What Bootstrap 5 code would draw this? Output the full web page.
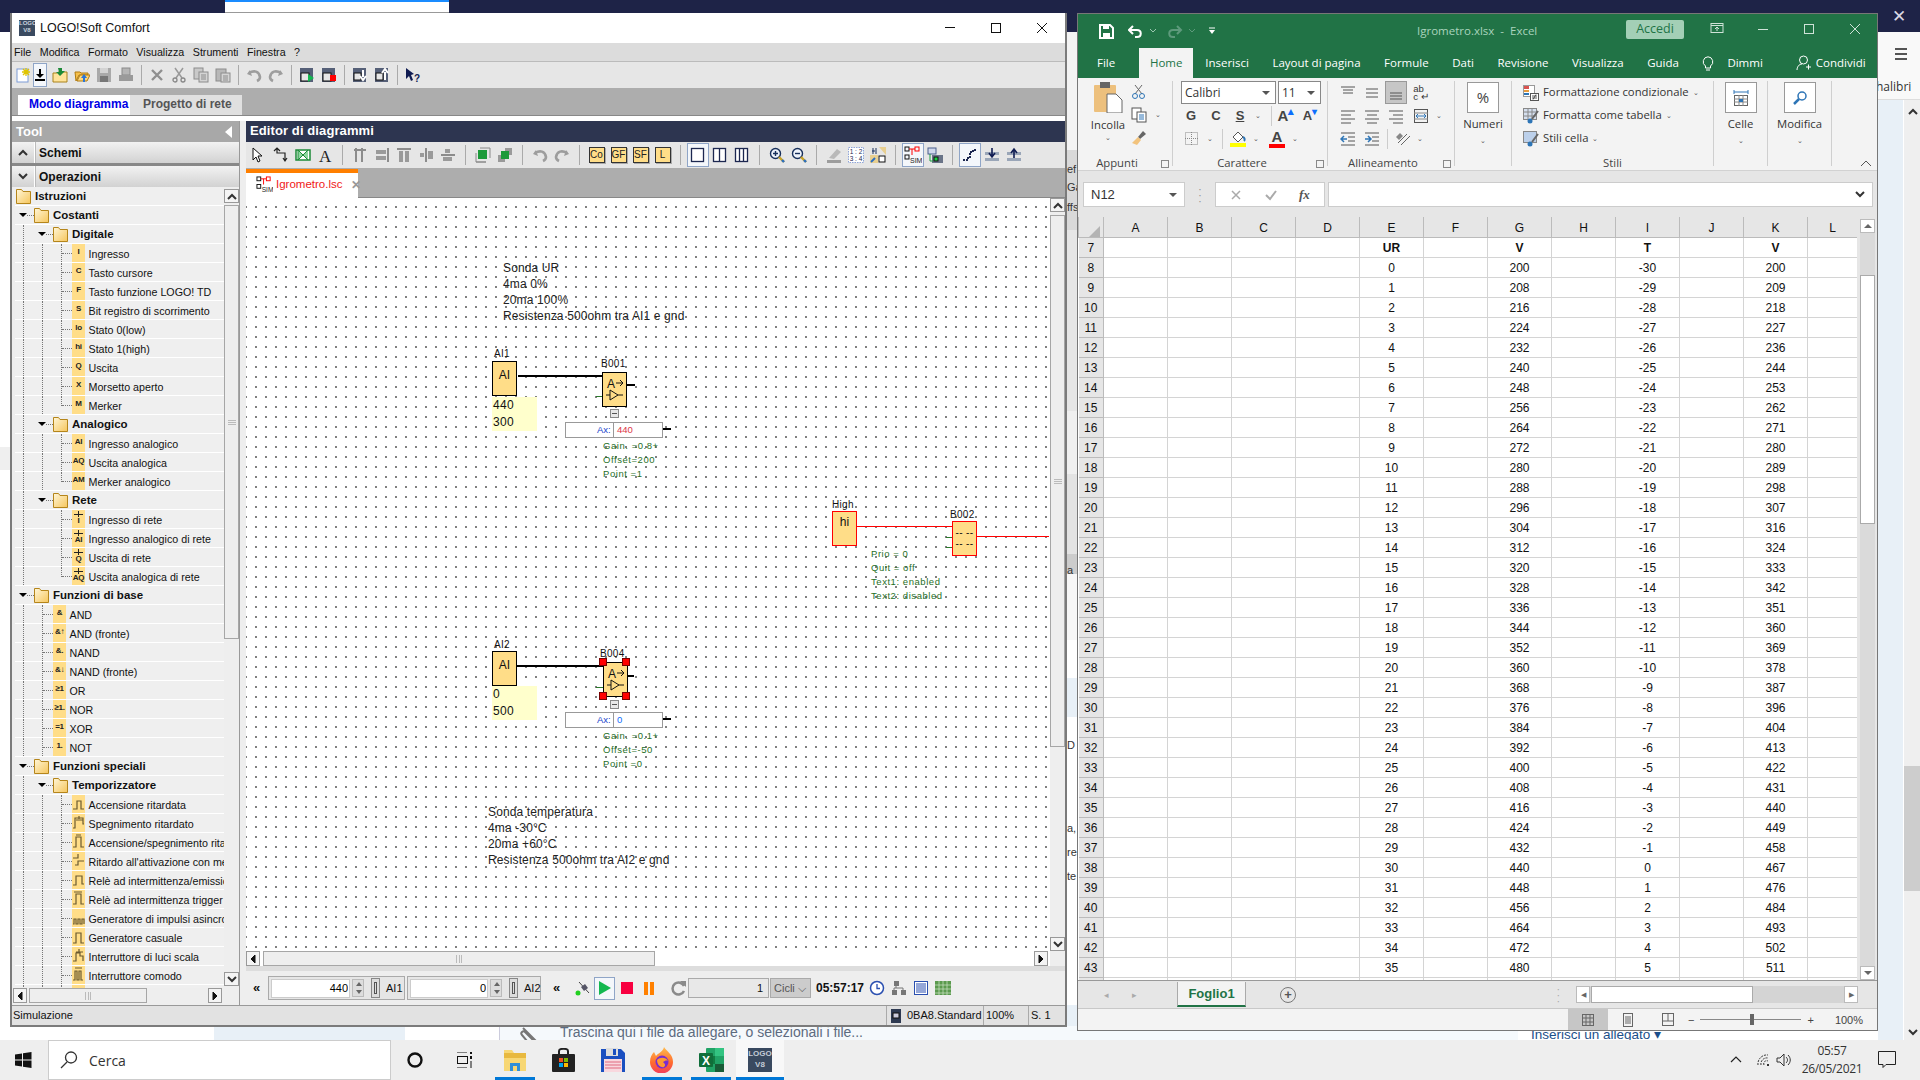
<!DOCTYPE html>
<html lang="it">
<head>
<meta charset="UTF-8">
<title>LOGO!Soft Comfort</title>
<link href="https://cdn.jsdelivr.net/npm/bootstrap@5.3.0/dist/css/bootstrap.min.css" rel="stylesheet">
<style>
body { margin:0; background:#fff; font-family:"Liberation Sans",Arial,sans-serif; font-size:11px; color:#111; overflow:hidden; }
svg { display:block; flex:none; }
#desktop { width:1920px; height:1080px; }

/* desktop behind the windows */
.bg-top { left:0; top:0; width:1920px; height:32px; background:#1e2347; }
.bg-tab { left:225px; top:0; width:224px; height:13px; background:#fff; border-top:2px solid #1a8cff; border-bottom:1px solid #999; }
.bg-left { left:0; top:447px; width:10px; height:23px; background:#efefef; }
.bg-row { left:1878px; top:32px; width:42px; height:68px; background:#f9f9f9; border-bottom:1px solid #ddd; font-family:"Open Sans",sans-serif; font-size:12px; color:#333; }
.bg-burger { left:17px; top:16px; width:12px; height:12px; border-top:2px solid #555; border-bottom:2px solid #555; }
.bg-burger::after { content:""; display:block; margin-top:3px; border-top:2px solid #555; }
.bg-calibri { left:-2px; top:46px; }
.bg-blue { left:1878px; top:100px; width:25px; height:940px; background:#e8f0f7; }
.bg-scroll { left:1904px; top:100px; width:16px; height:940px; background:#efefef; }
.bg-thumb { left:0; top:666px; width:16px; height:125px; background:#cdcdcd; }
.bg-close { left:1892px; top:10px; color:#d8d8e4; font-size:17px; line-height:14px; }
.bg-up { left:3px; top:7px; }
.bg-down { left:3px; top:928px; }
.gap-col { left:1067px; top:32px; width:10px; height:1008px; overflow:hidden; }
.gap-txt { position:absolute; left:0; font-size:11px; color:#333; white-space:nowrap; }
.behind { left:0; top:1026px; width:1920px; height:14px; overflow:hidden; }
.bh-a { width:214px; background:#fff; }
.bh-b { width:191px; background:#e8f0f7; }
.bh-c { width:95px; background:#fff; border-right:1px solid #ccd; }
.bh-d { width:577px; background:#f5f9fc; padding-left:19px; color:#5c6b80; font-size:14px; line-height:13px; gap:17px; }
.bh-e { width:441px; background:#f5f9fc; padding-left:441px; }
.attach { left:1518px; top:1030px; width:156px; height:10px; background:#fff; color:#1b4f8a; font-size:13.5px; line-height:9px; text-align:center; overflow:hidden; white-space:nowrap; }

/* LOGO window */
.win-logo { left:10px; top:13px; width:1057px; height:1014px; background:#eee; border:2px solid #7b7b7b; border-top:0; }
.lg-title, .lg-menu, .lg-bar, .lg-tabs, .lg-white, .lg-status, .tool-head, .acc-row, .acc-bar, .hs, .ed-head, .ed-bar, .ed-tabs, .ed-sim { flex:none; }
.lg-main { flex:1 1 0; min-height:0; }
.lg-title { height:30px; background:#fff; padding-left:7px; gap:5px; font-size:12.5px; }
.lg-icon { width:16px; height:16px; background:#3a4a60; color:#c9d2dc; font:bold 6px/7px "Liberation Sans",sans-serif; text-align:center; overflow:hidden; }
.win-ctl { margin-left:auto; gap:0; padding-right:0; }
.win-ctl span { width:46px; display:flex; justify-content:center; }
.lg-menu { height:19px; background:#dcdcdc; padding-left:2px; gap:8.5px; font-size:10.7px; border-bottom:1px solid #bbb; }
.lg-bar { height:26px; background:#e6e6e6; padding-left:1px; }
.tb { width:22px; height:24px; display:flex; align-items:center; justify-content:center; flex:none; }
.tb-nar { width:14px; margin-left:-2px; margin-right:2px; }
.tb-on { border:1px solid #8fa5c7; background:#f4f7fb; }
.lg-bar .sep { width:1px; height:20px; background:#aaa; margin:0 4px; flex:none; }
.lg-tabs { height:28px; background:#adadad; padding:7px 0 0 6px; border-bottom:1px solid #888; font-size:12px; font-weight:bold; }
.lg-tab { height:20px; line-height:19px; }
.lg-tab-on { width:112px; background:#fff; color:#0000e6; padding-left:11px; }
.lg-tab-off { width:112px; background:#e0e0e0; color:#555; padding-left:13px; }
.lg-white { height:5px; background:#fff; }

.lg-left { width:228px; border-right:1px solid #999; flex:none; }
.tool-head { height:21px; background:#a8a8a8; color:#fff; font-size:13px; font-weight:bold; padding:0 6px 0 4px; }
.acc-row { height:21px; background:linear-gradient(#f2f2f2,#d2d2d2); font-size:12px; font-weight:bold; }
.acc-ic { width:23px; height:100%; border-right:1px solid #fff; display:flex; align-items:center; justify-content:center; box-shadow:1px 0 0 #bbb; margin-right:4px; }
.acc-bar { height:3px; background:#888; }
.tree-wrap { flex:1 1 0; min-height:0; }
.tree { width:209px; margin-left:3px; overflow:hidden; }
.tr { height:19px; flex:none; border-bottom:1px solid #fff; padding-left:8px; white-space:nowrap; background:#efefef; overflow:hidden; font-size:10.7px; }
.tr span:last-child, .tr b { padding-top:2px; }
.tr.d0 { padding-left:1px; }
.ind { width:19px; flex:none; align-self:stretch; border-left:1px dotted #777; }
.ind.none { border-left:0; }
.conn { width:11px; flex:none; align-self:stretch; border-left:1px dotted #777; position:relative; }
.conn::after { content:""; position:absolute; left:0; right:0; top:9px; border-top:1px dotted #777; }
.conn.last { align-self:flex-start; height:10px; }
.tri { width:0; height:0; flex:none; margin-left:-4px; border:4px solid transparent; border-top:4px solid #000; border-bottom:0; }
.tconn { width:7px; flex:none; border-top:1px dotted #777; }
.fold { margin-right:4px; }
.tr b { font-size:11.5px; }
.lf { width:13px; height:18px; flex:none; background:#ffdd88; margin-right:3.5px; font:bold 8px/15px "Liberation Sans",sans-serif; color:#222; text-align:center; overflow:hidden; white-space:nowrap; letter-spacing:-.3px; }
.lf-net { line-height:8px; padding-top:7px; font-size:8px; position:relative; }
.lf-net::before { content:""; position:absolute; left:2px; right:2px; top:4px; border-top:1px solid #222; }
.lf-net::after { content:""; position:absolute; left:6px; top:1px; height:6px; border-left:1px solid #222; }

.sb { width:15px; background:#eee; flex:none; }
.sb-btn { width:15px; height:14px; background:#f4f4f4; border:1px solid #999; display:flex; align-items:center; justify-content:center; flex:none; }
.sb-thumb { border:1px solid #a6a6a6; background:#eee; flex:none; }
.sb-tree-gap { height:2px; }
.sb-tree-thumb { height:434px; margin-top:2px; }
.grip-h { width:8px; height:5px; border-top:1px solid #bbb; border-bottom:1px solid #bbb; position:relative; }
.grip-h::after { content:""; position:absolute; left:0; right:0; top:1px; border-top:1px solid #bbb; }
.grip-v { width:6px; height:8px; border-left:1px solid #bbb; border-right:1px solid #bbb; position:relative; }
.grip-v::after { content:""; position:absolute; top:0; bottom:0; left:2px; border-left:1px solid #bbb; }
.hs { height:15px; padding-left:1px; margin-bottom:2px; }
.hs-btn { width:14px; height:15px; background:#f4f4f4; border:1px solid #999; display:flex; align-items:center; justify-content:center; flex:none; }
.hs-tree-thumb { width:118px; height:15px; margin:0 61px 0 2px; }
.hs-canvas-thumb { width:392px; height:15px; margin:0 379px 0 3px; }
.lg-gap { width:6px; flex:none; background:#eee; }
.ed-col { min-width:0; }

.ed-head { height:21px; background:#2d3550; color:#fff; font-size:13px; font-weight:bold; padding:0 0 2px 4px; letter-spacing:.1px; }
.ed-bar { height:26px; background:#e6e6e6; padding-left:1.5px; }
.ed-bar .sep { width:1px; height:20px; background:#aaa; margin:0 6px; flex:none; }
.fb { width:16px; height:16px; background:#ffdd88; border:1px solid #333; box-shadow:1px 1px 0 #aaa; font-size:10px; line-height:14px; text-align:center; color:#222; }
.ed-tabs { height:30px; background:#adadad; border-top:1px solid #adadad; border-bottom:1px solid #888; }
.ed-tab { width:112px; height:29px; background:#fff; border-top:4px solid #ff7f00; padding:0 0 2px 10px; color:#f01818; font-size:11.5px; gap:3px; }
.ed-close { margin-left:6px; color:#999; font-size:12px; font-weight:bold; }
.ed-body { flex:1 1 0; min-height:0; }
.cv-scroll { width:15px; background:#eee; flex:none; }
.cv-thumb { height:532px; margin-top:3px; }
.cv-corner { height:15px; }

.canvas { position:relative; overflow:hidden; background-color:#fff; background-image:radial-gradient(circle at 1px 1px,#222 .6px,transparent .85px); background-size:10px 10px; background-position:-1px 8px; font-size:12px; }
.cv-txt { position:absolute; line-height:16px; letter-spacing:.13px; white-space:nowrap; color:#222; }
.t-ur { left:257px; top:62px; }
.t-temp { left:242px; top:606px; }
.lbl { position:absolute; font-size:10px; line-height:12px; letter-spacing:.3px; white-space:nowrap; }
.l-ai1 { left:248px; top:150px; }
.l-ai2 { left:248px; top:441px; }
.l-b1 { left:355px; top:160px; }
.l-b4 { left:354px; top:450px; }
.l-high { left:586px; top:301px; }
.l-b2 { left:704px; top:311px; }
.blk { position:absolute; width:25px; height:35px; background:#ffdd88; border:1px solid #000; text-align:center; font-size:12px; line-height:20px; }
.b-red { border-color:#f00; }
.b-ai1 { left:246px; top:163px; line-height:26px; }
.b-ai2 { left:246px; top:453px; line-height:26px; }
.b-1 { left:356px; top:174px; }
.b-4 { left:357px; top:464px; }
.b-high { left:586px; top:313px; }
.b-2 { left:706px; top:323px; font-size:10px; line-height:11px; padding-top:5px; white-space:pre; letter-spacing:.4px; }
.vals { position:absolute; width:45px; height:34px; background:#ffc; font-size:12px; line-height:17px; padding-left:1px; letter-spacing:.3px; }
.v-1 { left:246px; top:199px; }
.v-2 { left:246px; top:488px; }
.ln { position:absolute; background:#000; }
.w-1 { left:272px; top:177px; width:84px; height:2px; }
.w-2 { left:271px; top:467px; width:86px; height:2px; }
.s-1 { left:381px; top:186px; width:8px; height:2px; }
.s-2 { left:417px; top:230px; width:8px; height:2px; }
.s-3 { left:381px; top:477px; width:7px; height:2px; }
.s-4 { left:417px; top:520px; width:8px; height:2px; }
.g-1 { left:350px; top:198px; width:6px; height:1px; background:#2a7a2a; }
.g-2 { left:350px; top:489px; width:7px; height:1px; background:#2a7a2a; }
.g-3 { left:700px; top:339px; width:6px; height:1px; background:#2a7a2a; }
.g-4 { left:700px; top:349px; width:6px; height:1px; background:#2a7a2a; }
.r-1 { left:610px; top:328px; width:96px; height:1px; background:#f00; }
.r-2 { left:731px; top:338px; width:72px; height:1px; background:#f00; }
.mini { position:absolute; width:9px; height:9px; background:#e8e8e8; border:1px solid #888; }
.mini::after { content:""; position:absolute; left:1px; right:1px; top:3px; border-top:1px solid #555; }
.mn-1 { left:364px; top:211px; }
.mn-2 { left:364px; top:502px; }
.axb { position:absolute; left:319px; width:98px; height:16px; background:#fff; border:1px solid #999; font-size:9.5px; line-height:14px; }
.axb-1 { top:224px; }
.axb-2 { top:514px; }
.axb i { position:absolute; left:31px; font-style:normal; color:#2244cc; }
.axb s { position:absolute; left:47px; top:0; height:100%; border-left:1px solid #999; padding-left:3px; text-decoration:none; }
.gn { position:absolute; color:#1f6f1f; font-size:9.5px; line-height:14px; letter-spacing:.55px; white-space:nowrap; }
.gn-1 { left:357px; top:241px; }
.gn-2 { left:357px; top:531px; }
.gn-3 { left:625px; top:349px; }
.hd { position:absolute; width:8px; height:8px; background:#f00; border:1px solid #700; }
.h-a { left:353px; top:460px; }
.h-b { left:376px; top:460px; }
.h-c { left:353px; top:494px; }
.h-d { left:376px; top:494px; }

.ed-sim { height:39px; background:#eee; border-top:5px solid #ddd; padding-left:7px; font-size:11px; }
.dbl { width:12px; font-size:13px; font-weight:bold; flex:none; }
.dbl-2 { margin-left:12px; margin-right:7px; }
.spin { height:24px; background:#e6e6e6; border:1px solid #aaa; padding:2px; flex:none; gap:2px; }
.spin-1 { width:137px; margin-left:3px; }
.spin-2 { width:134px; margin-left:2px; }
.spin input { width:79px; height:19px; border:1px solid #ccc; background:#fff; font-size:11px; text-align:right; padding:0 1px; }
.spin-2 input { width:78px; }
.arr { width:12px; height:18px; background:#ddd; border:1px solid #bbb; flex:none; }
.sl { width:9px; height:20px; margin:0 4px 0 5px; border:1px solid #888; flex:none; background:#ddd; }
.sl::after { content:""; display:block; width:3px; height:12px; margin:3px 2px; border:1px solid #555; }
.sim-btn { width:21px; height:23px; border:1px solid #8fa5c7; background:#f4f7fb; display:flex; align-items:center; justify-content:center; flex:none; margin:0 1px 0 0; }
.count { width:81px; height:20px; background:#e8e8e8; border:1px solid #aaa; text-align:right; padding-right:5px; line-height:18px; margin-left:-2px; flex:none; }
.cicli { width:41px; height:20px; background:#ccc; border:1px solid #aaa; padding-left:3px; line-height:18px; color:#555; margin:0 5px 0 1px; flex:none; }
.clock { font-size:12px; font-weight:bold; width:50px; flex:none; }
.lg-status { height:20px; background:#e2e2e2; border-top:1px solid #999; padding-left:1px; }
.st-cell { border-left:1px solid #aaa; height:100%; padding-left:2px; flex:none; }
.st-a { width:97px; gap:5px; margin-left:auto; }
.st-b { width:45px; }
.st-c { width:37px; }

/* Excel window */
.win-xl { left:1077px; top:13px; width:801px; height:1018px; background:#f3f3f3; border:1px solid #777; font-family:"Open Sans",sans-serif; font-size:12px; color:#333; }
.xl-title { height:34px; background:#217346; position:relative; }
.xl-name { position:absolute; left:339px; top:8px; color:#a9d3bd; font-size:11.5px; white-space:pre; }
.xl-acc { position:absolute; left:548px; top:6px; width:58px; height:19px; background:#a3cfb6; color:#217346; font-size:12.5px; line-height:18px; text-align:center; border-radius:2px; }
.xl-ic { position:absolute; }
.xi-save { left:21px; top:10px; }
.xi-undo { left:50px; top:10px; }
.xi-uc { left:71px; top:14px; }
.xi-redo { left:89px; top:10px; }
.xi-rc { left:110px; top:14px; }
.xi-q { left:130px; top:13px; }
.xi-box { left:632px; top:8px; }
.xi-min { left:680px; top:15px; }
.xi-max { left:726px; top:10px; }
.xi-x { left:772px; top:10px; }
.xl-tabs { height:30px; background:#217346; color:#fff; font-size:11.5px; padding-left:19px; }
.xl-tabs span { flex:none; white-space:nowrap; }
.xt-file { margin-right:24px; }
.xt-home { width:54px; height:30px; line-height:30px; text-align:center; background:#f3f3f3; color:#217346; margin-right:12px; }
.xt-a { margin-right:23.5px; }
.xt-bulb { margin-right:13px; }
.xt-me { margin-left:33px; margin-right:4px; }
.ribbon { height:93px; background:#f3f3f3; border-bottom:1px solid #d2d2d2; font-size:11.3px; }
.rg { height:85px; margin-top:3px; border-right:1px solid #cfcfcf; flex:none; position:relative; }
.rg-body { height:66px; }
.rg-lbl { position:absolute; bottom:-4px; left:0; right:0; text-align:center; line-height:14px; color:#444; }
.rg-lau { position:absolute; right:3px; bottom:-2px; width:8px; height:8px; border:1px solid #888; }
.lbl-l { right:16px; }
.rg-app { width:95px; }
.rg-car { width:155px; padding-left:8px; }
.rg-ali { width:127px; padding-left:8px; }
.rg-num { width:57px; }
.rg-sti { width:202px; padding-left:11px; }
.rg-cel { width:54px; }
.rg-mod { width:64px; }
.paste-col { width:50px; padding-left:14px; }
.paste-col span { margin-left:-4px; }
.mini-col { gap:7px; padding-top:3px; margin-left:3px; }
.chev { font-size:7px; color:#555; line-height:8px; text-align:center; }
.combo { height:23px; background:#fff; border:1px solid #888; padding:0 5px 0 3px; font-size:12px; flex:none; }
.combo-f { width:95px; margin-right:2px; }
.combo-s { width:43px; }
.caret-d { width:0; height:0; border:4px solid transparent; border-top:4px solid #555; border-bottom:0; margin-left:auto; }
.frow { display:grid; height:23px; align-items:center; justify-items:center; }
.fr-2 { grid-template-columns:20px 30px 18px 18px 8px 22px 26px; }
.fr-3 { grid-template-columns:22px 14px 11px 20px 16px 26px 10px; }
.frow b { font:bold 13px "Liberation Sans",sans-serif; color:#444; }
.r-sep { width:1px; height:20px; background:#ccc; }
.big-a { font:bold 15px/15px "Liberation Sans",sans-serif; color:#444; position:relative; }
.sm-a { font-size:13px; line-height:15px; }
.a-red { border-bottom:4px solid #f00; line-height:14px; display:block; width:16px; text-align:center; }
.af-1 { grid-template-columns:24px 24px 24px 26px 10px; }
.af-3 { grid-template-columns:24px 24px 6px 26px 8px; }
.al-on { width:22px; height:23px; background:#c6c6c6; border:1px solid #999; display:flex; align-items:center; justify-content:center; }
.abc { font:9.5px/8px "Liberation Sans",sans-serif; color:#333; text-align:left; }
.rbox { width:32px; height:31px; background:#fff; border:1px solid #999; display:flex; align-items:center; justify-content:center; font-size:15px; color:#444; margin:0 auto; }
.rb-wrap { padding-top:1px; text-align:center; line-height:15px; }
.rb-wrap p { margin:3px 0 0; }
.st-row { height:23px; gap:4px; white-space:nowrap; }
.collapse-ic { position:absolute; left:782px; top:82px; }
.xl-fx { height:46px; background:#e6e6e6; padding:11px 0 0 5px; }
.fx-box { height:25px; background:#fff; border:1px solid #ccc; flex:none; font-family:"Liberation Sans",sans-serif; font-size:13px; }
.fx-name { width:102px; padding:0 7px; }
.fx-dots { width:30px; text-align:center; color:#999; line-height:6px; font-size:11px; }
.fx-btn { width:110px; justify-content:space-around; padding:0 3px; color:#999; }
.fx-in { width:545px; margin-left:3px; padding-right:6px; justify-content:flex-end; }
.fx-f { font:italic bold 13px "Liberation Serif",serif; color:#555; }
.xl-gridwrap { height:763px; background:#e6e6e6; flex:none; }
.xl-sheet { width:779px; overflow:hidden; flex:none; }
.xl-table { width:779px; table-layout:fixed; border-collapse:collapse; font:12px "Liberation Sans",sans-serif; color:#111; margin:0; background:#fff; }
.xl-table th, .xl-table td { height:20px; padding:1px 0 0; text-align:center; line-height:18px; border:1px solid #d4d4d4; box-sizing:border-box; }
.xl-table thead th { background:#e6e6e6; font-weight:normal; border-color:#bbb; border-top:0; }
.xl-table tbody th { background:#e6e6e6; font-weight:normal; border-color:#bbb; border-left:0; }
.xl-table td.hd-b { font-weight:bold; }
.xl-corner { border:0; border-left:11px solid transparent; border-bottom:11px solid #b4b4b4; width:0; height:0; margin:4px 0 0 10px; }
.xl-v { width:15px; margin:2px 0 0 3px; background:#dadada; flex:none; height:761px; }
.xl-vbtn { width:15px; height:14px; background:#fff; border:1px solid #bbb; display:flex; align-items:center; justify-content:center; flex:none; }
.xl-vthumb { height:249px; width:15px; background:#fff; border:1px solid #aaa; margin-top:42px; margin-bottom:auto; }
.xl-sheets { height:28px; background:#e6e6e6; border-top:1px solid #999; padding-left:0; flex:none; }
.sh-arrows { width:99px; padding-left:26px; gap:23px; color:#aaa; font-size:9px; }
.sh-tab { width:69px; height:25px; margin-top:-1px; background:#f3f3f3; border:1px solid #aaa; border-top:0; border-bottom:2px solid #217346; color:#217346; font:bold 13px/23px "Liberation Sans",sans-serif; text-align:center; }
.sh-plus { width:16px; height:16px; border:1px solid #777; border-radius:50%; margin-left:34px; color:#555; text-align:center; font:bold 13px/13px "Liberation Sans",sans-serif; }
.sh-dots { margin-left:261px; margin-right:16px; color:#aaa; line-height:6px; font-size:10px; width:3px; }
.sh-sb { width:282px; height:17px; background:#d4d4d4; }
.sh-sbtn { width:14px; height:17px; background:#fff; border:1px solid #bbb; color:#666; font-size:7px; text-align:center; line-height:15px; flex:none; }
.sh-thumb { width:162px; height:17px; margin-left:1px; margin-right:auto; background:#fff; border:1px solid #aaa; }
.xl-status { height:22px; background:#f3f3f3; border-top:1px solid #c8c8c8; padding-left:490px; font:11px "Liberation Sans",sans-serif; color:#444; flex:none; }
.vw { width:40px; height:21px; display:flex; align-items:center; justify-content:center; flex:none; }
.vw-on { background:#c6c6c6; }
.zm-line { width:101px; height:1px; background:#888; margin:0 6px; position:relative; flex:none; }
.zm-thumb { position:absolute; left:50px; top:-5px; width:4px; height:11px; background:#666; }
.zm-pct { margin-left:21px; }

/* taskbar */
.taskbar { left:0; top:1040px; width:1920px; height:40px; background:#eee; }
.start { width:48px; padding-left:15px; flex:none; }
.search { width:343px; height:40px; background:#fff; border:1px solid #ccc; padding-left:11px; gap:11px; font-size:14px; color:#333; flex:none; font-family:"Open Sans",sans-serif; }
.tk { height:40px; display:flex; align-items:center; justify-content:center; flex:none; width:48px; }
.tk-on { box-shadow:inset 0 -3px 0 #0078d7; }
.tk-2 { margin-left:1px; }
.tk-fold { width:40px; margin:0 4px 0 7px; }
.tk-flop { margin-left:2px; }
.tk-fox { width:40px; margin-left:5px; }
.tk-xl { width:40px; margin-left:9px; }
.tk-logo { background:#f8f8f8; margin-left:5px; }
.tk-bmp { width:24px; height:24px; background:#3a4a60; color:#c4ccd6; font:bold 8px/11px "Liberation Sans",sans-serif; text-align:center; overflow:hidden; }
.tk-tray { margin-left:auto; padding-right:24px; color:#333; }
.tr-up { margin-right:13px; }
.tr-wifi { margin-right:5px; }
.tk-clock { width:76px; text-align:center; font:12px/18px "Open Sans",sans-serif; letter-spacing:-.3px; color:#333; margin:0 8px 0 2px; }
</style>
</head>
<body>
<div id="desktop" class="position-relative overflow-hidden">

  <!-- what shows around the windows -->
  <div class="bg-top position-absolute"></div>
  <div class="bg-tab position-absolute"></div>
  <div class="bg-left position-absolute"></div>
  <div class="bg-close position-absolute">✕</div>
  <div class="bg-row position-absolute overflow-hidden"><div class="bg-burger position-absolute"></div><span class="bg-calibri position-absolute">halibri</span></div>
  <div class="bg-blue position-absolute"></div>
  <div class="bg-scroll position-absolute">
    <span class="bg-up position-absolute" data-i="chevU"></span>
    <div class="bg-thumb position-absolute"></div>
    <span class="bg-down position-absolute" data-i="chevD"></span>
  </div>
  <div class="gap-col position-absolute d-flex flex-column" id="gap"></div>
  <div class="behind position-absolute d-flex">
    <div class="bh-a"></div><div class="bh-b"></div><div class="bh-c"></div>
    <div class="bh-d d-flex"><span data-i="clip"></span><span>Trascina qui i file da allegare, o selezionali i file...</span></div>
    <div class="bh-e"></div>
  </div>
  <div class="attach position-absolute">Inserisci un allegato ▾</div>

  <!-- LOGO!Soft Comfort -->
  <div class="win-logo position-absolute d-flex flex-column">
    <div class="lg-title d-flex align-items-center">
      <div class="lg-icon">LOGO<br>V8</div>
      <span>LOGO!Soft Comfort</span>
      <div class="win-ctl d-flex">
        <span data-i="wMin"></span><span data-i="wMax"></span><span data-i="wClose"></span>
      </div>
    </div>
    <div class="lg-menu d-flex align-items-center">
      <span>File</span><span>Modifica</span><span>Formato</span><span>Visualizza</span><span>Strumenti</span><span>Finestra</span><span>?</span>
    </div>
    <div class="lg-bar d-flex align-items-center">
      <span class="tb" data-i="nw"></span><span class="tb tb-nar tb-on" data-i="dl"></span><span class="tb" data-i="open"></span><span class="tb" data-i="open2"></span><span class="tb" data-i="save"></span><span class="tb" data-i="print"></span><i class="sep"></i>
      <span class="tb" data-i="x"></span><span class="tb" data-i="cut"></span><span class="tb" data-i="copy"></span><span class="tb" data-i="paste"></span><i class="sep"></i>
      <span class="tb" data-i="undo"></span><span class="tb" data-i="redo"></span><i class="sep"></i>
      <span class="tb" data-i="simGo"></span><span class="tb" data-i="simStop"></span><i class="sep"></i>
      <span class="tb" data-i="pcDown"></span><span class="tb" data-i="pcUp"></span><i class="sep"></i>
      <span class="tb" data-i="help"></span>
    </div>
    <div class="lg-tabs d-flex">
      <div class="lg-tab lg-tab-on">Modo diagramma</div>
      <div class="lg-tab lg-tab-off">Progetto di rete</div>
    </div>
    <div class="lg-white"></div>

    <div class="lg-main d-flex">
      <div class="lg-left d-flex flex-column">
        <div class="tool-head d-flex align-items-center justify-content-between"><span>Tool</span><span data-i="triL"></span></div>
        <div class="acc-row d-flex align-items-center"><span class="acc-ic" data-i="chevU"></span>Schemi</div>
        <div class="acc-bar"></div>
        <div class="acc-row d-flex align-items-center"><span class="acc-ic" data-i="chevD"></span>Operazioni</div>
        <div class="tree-wrap d-flex">
          <div class="tree d-flex flex-column" id="tree"></div>
          <div class="sb d-flex flex-column ms-auto">
            <div class="sb-tree-gap"></div>
            <div class="sb-btn" data-i="chevU"></div>
            <div class="sb-thumb sb-tree-thumb d-flex align-items-center justify-content-center"><i class="grip-h"></i></div>
            <div class="sb-btn mt-auto" data-i="chevD"></div>
            <div class="sb-tree-gap"></div>
          </div>
        </div>
        <div class="hs d-flex">
          <div class="hs-btn" data-i="arrL"></div>
          <div class="sb-thumb hs-tree-thumb d-flex align-items-center justify-content-center"><i class="grip-v"></i></div>
          <div class="hs-btn" data-i="arrR"></div>
        </div>
      </div>
      <div class="lg-gap"></div>
      <div class="ed-col d-flex flex-column flex-grow-1">
        <div class="ed-head d-flex align-items-center">Editor di diagrammi</div>
        <div class="ed-bar d-flex align-items-center">
          <span class="tb" data-i="pointer"></span><span class="tb" data-i="wire"></span><span class="tb" data-i="block"></span><span class="tb" data-i="serifA"></span><i class="sep"></i>
          <span class="tb" data-i="al1"></span><span class="tb" data-i="al2"></span><span class="tb" data-i="al3"></span><span class="tb" data-i="al4"></span><span class="tb" data-i="al5"></span><i class="sep"></i>
          <span class="tb" data-i="front"></span><span class="tb" data-i="back"></span><i class="sep"></i>
          <span class="tb" data-i="undo"></span><span class="tb" data-i="redo"></span><i class="sep"></i>
          <span class="tb"><span class="fb">Co</span></span><span class="tb"><span class="fb">GF</span></span><span class="tb"><span class="fb">SF</span></span><span class="tb"><span class="fb">L</span></span><i class="sep"></i>
          <span class="tb tb-on" data-i="col1"></span><span class="tb" data-i="col2"></span><span class="tb" data-i="col3"></span><i class="sep"></i>
          <span class="tb" data-i="zoomP"></span><span class="tb" data-i="zoomM"></span><i class="sep"></i>
          <span class="tb" data-i="eraser"></span><span class="tb" data-i="numbers"></span><span class="tb" data-i="split"></span><i class="sep"></i>
          <span class="tb tb-on" data-i="sim"></span><span class="tb" data-i="online"></span><i class="sep"></i>
          <span class="tb tb-on" data-i="route"></span><span class="tb" data-i="sink"></span><span class="tb" data-i="rise"></span>
        </div>
        <div class="ed-tabs">
          <div class="ed-tab d-flex align-items-center"><span data-i="simSm"></span><span>Igrometro.lsc</span><span class="ed-close">✕</span></div>
        </div>
        <div class="ed-body d-flex">
          <div class="ed-col d-flex flex-column flex-grow-1">
            <div class="canvas flex-grow-1">
              <div class="cv-txt t-ur">Sonda UR<br>4ma 0%<br>20ma 100%<br>Resistenza 500ohm tra AI1 e gnd</div>

              <div class="lbl l-ai1">AI1</div>
              <div class="blk b-ai1">AI</div>
              <div class="vals v-1">440<br>300</div>
              <div class="ln w-1"></div>
              <div class="lbl l-b1">B001</div>
              <div class="ln g-1"></div>
              <div class="blk b-1" data-i="amp"></div>
              <div class="ln s-1"></div>
              <div class="mini mn-1"></div>
              <div class="axb axb-1"><i>Ax:</i><s class="text-danger">440</s></div>
              <div class="ln s-2"></div>
              <div class="gn gn-1">Gain. =0.8+<br>Offset=200<br>Point =1</div>

              <div class="lbl l-high">High</div>
              <div class="blk b-red b-high">hi</div>
              <div class="ln r-1"></div>
              <div class="lbl l-b2">B002</div>
              <div class="ln g-3"></div><div class="ln g-4"></div>
              <div class="blk b-red b-2">-- --
-- --</div>
              <div class="ln r-2"></div>
              <div class="gn gn-3">Prio = 0<br>Quit = off<br>Text1: enabled<br>Text2: disabled</div>

              <div class="lbl l-ai2">AI2</div>
              <div class="blk b-ai2">AI</div>
              <div class="vals v-2">0<br>500</div>
              <div class="ln w-2"></div>
              <div class="lbl l-b4">B004</div>
              <div class="ln g-2"></div>
              <div class="blk b-4" data-i="amp"></div>
              <div class="hd h-a"></div><div class="hd h-b"></div><div class="hd h-c"></div><div class="hd h-d"></div>
              <div class="ln s-3"></div>
              <div class="mini mn-2"></div>
              <div class="axb axb-2"><i>Ax:</i><s class="text-primary">0</s></div>
              <div class="ln s-4"></div>
              <div class="gn gn-2">Gain. =0.1+<br>Offset=-50<br>Point =0</div>

              <div class="cv-txt t-temp">Sonda temperatura<br>4ma -30°C<br>20ma +60°C<br>Resistenza 500ohm tra AI2 e gnd</div>
            </div>
            <div class="d-flex bg-white">
              <div class="hs-btn" data-i="arrL"></div>
              <div class="sb-thumb hs-canvas-thumb d-flex align-items-center justify-content-center"><i class="grip-v"></i></div>
              <div class="hs-btn" data-i="arrR"></div>
            </div>
          </div>
          <div class="cv-scroll d-flex flex-column">
            <div class="sb-btn" data-i="chevU"></div>
            <div class="sb-thumb cv-thumb d-flex align-items-center justify-content-center"><i class="grip-h"></i></div>
            <div class="sb-btn mt-auto" data-i="chevD"></div>
            <div class="cv-corner"></div>
          </div>
        </div>
        <div class="ed-sim d-flex align-items-center">
          <span class="dbl">«</span>
          <div class="spin spin-1 d-flex align-items-center"><input value="440" readonly><span class="arr" data-i="spinArr"></span><span class="sl"></span><span>AI1</span></div>
          <div class="spin spin-2 d-flex align-items-center"><input value="0" readonly><span class="arr" data-i="spinArr"></span><span class="sl"></span><span>AI2</span></div>
          <span class="dbl dbl-2">«</span>
          <span class="tb" data-i="plug"></span>
          <span class="sim-btn" data-i="play"></span>
          <span class="tb" data-i="stopR"></span>
          <span class="tb" data-i="pause"></span>
          <span class="tb ms-2" data-i="reload"></span>
          <div class="count">1</div>
          <div class="cicli">Cicli ⌵</div>
          <span class="clock">05:57:17</span>
          <span class="tb" data-i="clock"></span>
          <span class="tb" data-i="tree2"></span>
          <span class="tb" data-i="tbl"></span>
          <span class="tb" data-i="grid"></span>
        </div>
      </div>
    </div>

    <div class="lg-status d-flex align-items-center">
      <span>Simulazione</span>
      <div class="st-cell st-a d-flex align-items-center"><span data-i="plc"></span><span>0BA8.Standard</span></div>
      <div class="st-cell st-b d-flex align-items-center">100%</div>
      <div class="st-cell st-c d-flex align-items-center">S. 1</div>
    </div>
  </div>

  <!-- Excel -->
  <div class="win-xl position-absolute d-flex flex-column">
    <div class="xl-title flex-shrink-0">
      <span class="xl-ic xi-save" data-i="xSave"></span>
      <span class="xl-ic xi-undo" data-i="xUndo"></span>
      <span class="xl-ic xi-uc" data-i="xChevW"></span>
      <span class="xl-ic xi-redo" data-i="xRedo"></span>
      <span class="xl-ic xi-rc" data-i="xChevG"></span>
      <span class="xl-ic xi-q" data-i="xQat"></span>
      <span class="xl-name">Igrometro.xlsx  -  Excel</span>
      <div class="xl-acc">Accedi</div>
      <span class="xl-ic xi-box" data-i="xBox"></span>
      <span class="xl-ic xi-min" data-i="xMin"></span>
      <span class="xl-ic xi-max" data-i="xMax"></span>
      <span class="xl-ic xi-x" data-i="xClose"></span>
    </div>
    <div class="xl-tabs d-flex align-items-center flex-shrink-0">
      <span class="xt-file">File</span>
      <span class="xt-home">Home</span>
      <span class="xt-a">Inserisci</span><span class="xt-a">Layout di pagina</span><span class="xt-a">Formule</span><span class="xt-a">Dati</span><span class="xt-a">Revisione</span><span class="xt-a">Visualizza</span><span class="xt-a">Guida</span>
      <span class="xt-bulb" data-i="bulb"></span><span>Dimmi</span>
      <span class="xt-me" data-i="person"></span><span>Condividi</span>
    </div>
    <div class="ribbon d-flex position-relative flex-shrink-0">
      <div class="rg rg-app">
        <div class="rg-body d-flex">
          <div class="paste-col d-flex flex-column align-items-center"><span data-i="xPaste"></span><span class="mt-1">Incolla</span><span class="chev">⌄</span></div>
          <div class="mini-col d-flex flex-column">
            <span data-i="xCut"></span>
            <div class="d-flex align-items-center gap-2"><span data-i="xCopy"></span><span class="chev">⌄</span></div>
            <span data-i="xBrush"></span>
          </div>
        </div>
        <div class="rg-lbl lbl-l">Appunti</div><i class="rg-lau"></i>
      </div>
      <div class="rg rg-car">
        <div class="d-flex">
          <div class="combo combo-f d-flex align-items-center">Calibri<i class="caret-d"></i></div>
          <div class="combo combo-s d-flex align-items-center">11<i class="caret-d"></i></div>
        </div>
        <div class="frow fr-2"><b>G</b><b>C</b><b class="text-decoration-underline">S</b><span class="chev">⌄</span><i class="r-sep"></i><span class="big-a">A<sup class="text-primary">▴</sup></span><span class="big-a sm-a">A<sup class="text-primary">▾</sup></span></div>
        <div class="frow fr-3"><span data-i="xBorder"></span><span class="chev">⌄</span><i class="r-sep"></i><span data-i="xFill"></span><span class="chev">⌄</span><span class="big-a a-red">A</span><span class="chev">⌄</span></div>
        <div class="rg-lbl lbl-l">Carattere</div><i class="rg-lau"></i>
      </div>
      <div class="rg rg-ali">
        <div class="frow af-1"><span data-i="vTop"></span><span data-i="vMid"></span><span class="al-on" data-i="vBot"></span><span class="abc">ab<br>c ↵</span><span></span></div>
        <div class="frow af-1"><span data-i="hL"></span><span data-i="hC"></span><span data-i="hR"></span><span data-i="xMerge"></span><span class="chev">⌄</span></div>
        <div class="frow af-3"><span data-i="inL"></span><span data-i="inR"></span><i class="r-sep"></i><span data-i="xOrient"></span><span class="chev">⌄</span></div>
        <div class="rg-lbl lbl-l">Allineamento</div><i class="rg-lau"></i>
      </div>
      <div class="rg rg-num">
        <div class="rb-wrap"><div class="rbox">%</div><p>Numeri</p><span class="chev">⌄</span></div>
      </div>
      <div class="rg rg-sti">
        <div class="st-row d-flex align-items-center"><span data-i="xCond"></span><span>Formattazione condizionale</span><span class="chev">⌄</span></div>
        <div class="st-row d-flex align-items-center"><span data-i="xTable"></span><span>Formatta come tabella</span><span class="chev">⌄</span></div>
        <div class="st-row d-flex align-items-center"><span data-i="xStyle"></span><span>Stili cella</span><span class="chev">⌄</span></div>
        <div class="rg-lbl">Stili</div>
      </div>
      <div class="rg rg-cel">
        <div class="rb-wrap"><div class="rbox" data-i="xCells"></div><p>Celle</p><span class="chev">⌄</span></div>
      </div>
      <div class="rg rg-mod">
        <div class="rb-wrap"><div class="rbox" data-i="xFind"></div><p>Modifica</p><span class="chev">⌄</span></div>
      </div>
      <span class="collapse-ic" data-i="xCollapse"></span>
    </div>
    <div class="xl-fx d-flex flex-shrink-0">
      <div class="fx-box fx-name d-flex align-items-center">N12<i class="caret-d"></i></div>
      <div class="fx-dots pt-1">·<br>·<br>·</div>
      <div class="fx-box fx-btn d-flex align-items-center"><span data-i="fxX"></span><span data-i="fxOk"></span><span class="fx-f">fx</span></div>
      <div class="fx-box fx-in d-flex align-items-center"><span data-i="chevD"></span></div>
    </div>
    <div class="xl-gridwrap d-flex">
      <div class="xl-sheet"><table class="table xl-table" id="sheet"></table></div>
      <div class="xl-v d-flex flex-column">
        <div class="xl-vbtn"><span data-i="upTiny"></span></div>
        <div class="xl-vthumb"></div>
        <div class="xl-vbtn"><span data-i="dnTiny"></span></div>
      </div>
    </div>
    <div class="xl-sheets d-flex align-items-center">
      <div class="sh-arrows d-flex"><span>◂</span><span>▸</span></div>
      <div class="sh-tab">Foglio1</div>
      <div class="sh-plus">+</div>
      <div class="sh-dots">·<br>·<br>·</div>
      <div class="sh-sb d-flex">
        <div class="sh-sbtn">◀</div><div class="sh-thumb"></div><div class="sh-sbtn">▶</div>
      </div>
    </div>
    <div class="xl-status d-flex align-items-center">
      <span class="vw vw-on" data-i="vwN"></span><span class="vw" data-i="vwP"></span><span class="vw" data-i="vwB"></span>
      <span>−</span><div class="zm-line"><i class="zm-thumb"></i></div><span>+</span><span class="zm-pct">100%</span>
    </div>
  </div>

  <!-- taskbar -->
  <div class="taskbar position-absolute d-flex align-items-center">
    <div class="start" data-i="win"></div>
    <div class="search d-flex align-items-center"><span data-i="lens"></span><span>Cerca</span></div>
    <span class="tk" data-i="cortana"></span>
    <span class="tk tk-2" data-i="taskview"></span>
    <span class="tk tk-fold tk-on" data-i="folder"></span>
    <span class="tk" data-i="store"></span>
    <span class="tk tk-flop" data-i="floppy"></span>
    <span class="tk tk-fox tk-on" data-i="fox"></span>
    <span class="tk tk-xl tk-on" data-i="xlApp"></span>
    <span class="tk tk-logo tk-on"><span class="tk-bmp">LOGO<br>V8</span></span>
    <div class="tk-tray d-flex align-items-center">
      <span class="tr-up" data-i="trayUp"></span><span class="tr-wifi" data-i="wifi"></span><span data-i="speaker"></span>
      <div class="tk-clock">05:57<br>26/05/2021</div>
      <span data-i="notif"></span>
    </div>
  </div>
</div>

<script src="https://cdn.jsdelivr.net/npm/bootstrap@5.3.0/dist/js/bootstrap.bundle.min.js"></script>
<script>
  const s = (b, w = 16, h = 16) => `<svg width="${w}" height="${h}" viewBox="0 0 ${w} ${h}" fill="none">${b}</svg>`;
  const grey = '#8c8c8c';
  const navy = '#1c2750';
  const bars = (ys, x1, x2, c) => ys.map(y => `<path d="M${x1} ${y}H${x2}" stroke="${c}"/>`).join('');
  const wave = d => s(`<path d="${d}" stroke="#6b5a30" stroke-width="1.2"/>`, 13, 18);

  const ICONS = {
    chevU: s('<path d="M2 7l4-4 4 4" stroke="#333" stroke-width="2"/>', 12, 9),
    chevD: s('<path d="M2 2l4 4 4-4" stroke="#333" stroke-width="2"/>', 12, 9),
    arrL: s('<path d="M6 1L2 5l4 4z" fill="#111" stroke="#111"/>', 8, 10),
    arrR: s('<path d="M2 1l4 4-4 4z" fill="#111" stroke="#111"/>', 8, 10),
    triL: s('<path d="M7 0v12L0 6z" fill="#fff"/>', 8, 12),
    wMin: s('<path d="M1 5.5h10" stroke="#111"/>', 12, 12),
    wMax: s('<rect x="1.5" y="1.5" width="9" height="9" stroke="#111"/>', 12, 12),
    wClose: s('<path d="M1 1l10 10M11 1L1 11" stroke="#111"/>', 12, 12),
    clip: s('<path d="M4 2l14 14c4 4-2 8-5 5L3 9c-2-2 1-5 3-3l9 9" stroke="#777" stroke-width="2"/>', 24, 24),

    nw: s('<rect x="1" y="2" width="11" height="13" fill="#fff" stroke="#7d9bd6"/><path d="M10 1v8M6 5h8M7 2l6 6M13 2L7 8" stroke="#e0c400" stroke-width="1.3"/>'),
    dl: s('<path d="M6 1v6" stroke="#000" stroke-width="2"/><path d="M2 6h8L6 10z" fill="#000"/><rect x="1" y="11" width="10" height="2" fill="#000"/>', 12, 14),
    open: s('<path d="M1 6h4l1-1h9v10H1z" fill="#ffe39a" stroke="#a9821c"/><path d="M6 1h4v3h3L8 9 4 5h3z" fill="#1d8a38"/>'),
    open2: s('<path d="M1 5h5l1 1h7v2H5l-3 6z" fill="#f6c04c" stroke="#b07b10"/><path d="M3 14l3-6h10l-3 6z" fill="#ffd77a" stroke="#b07b10"/><path d="M9 15v-4H7l3-4 3 4h-2v4z" fill="#2a76d8"/>'),
    save: s('<path d="M1 1h14v14H1z" fill="#a9a9a9"/><rect x="4" y="1" width="8" height="5" fill="#d3d3d3"/><rect x="4" y="9" width="8" height="6" fill="#777"/>'),
    print: s('<rect x="4" y="1" width="8" height="7" fill="#b5b5b5" stroke="#8a8a8a"/><rect x="1" y="8" width="14" height="6" fill="#9a9a9a"/>'),
    x: s('<path d="M3 3l10 10M13 3L3 13" stroke="#8f8f8f" stroke-width="2.4"/>'),
    cut: s('<path d="M4 1l7 10M12 1L5 11" stroke="#9a9a9a" stroke-width="1.5"/><circle cx="4" cy="13" r="2" stroke="#888" stroke-width="1.3"/><circle cx="12" cy="13" r="2" stroke="#888" stroke-width="1.3"/>'),
    copy: s('<rect x="1" y="1" width="9" height="11" fill="#c9c9c9" stroke="#8c8c8c"/><rect x="6" y="5" width="9" height="10" fill="#d4d4d4" stroke="#8c8c8c"/>' + bars([8, 10, 12], 8, 13, grey)),
    paste: s('<rect x="1" y="2" width="10" height="12" fill="#b8b8b8" stroke="#8c8c8c"/><rect x="6" y="6" width="9" height="9" fill="#d4d4d4" stroke="#8c8c8c"/>' + bars([9, 11, 13], 8, 13, grey)),
    undo: s('<path d="M4 3L1 7l5 2" fill="#9d9d9d"/><path d="M3 6c5-3 10-2 11 4 0 2-1 3-3 4" stroke="#9d9d9d" stroke-width="2.6"/>'),
    redo: s('<path d="M12 3l3 4-5 2" fill="#9d9d9d"/><path d="M13 6C8 3 3 4 2 10c0 2 1 3 3 4" stroke="#9d9d9d" stroke-width="2.6"/>'),
    simGo: s('<rect x="1" y="1" width="13" height="14" fill="#566078"/><rect x="2" y="6" width="8" height="8" fill="#e6e6e6" stroke="#111"/><path d="M9 7l6 4-6 4z" fill="#13b850"/>'),
    simStop: s('<rect x="1" y="1" width="13" height="14" fill="#566078"/><rect x="2" y="6" width="8" height="8" fill="#e6e6e6" stroke="#111"/><rect x="9" y="8" width="6" height="6" fill="#f00"/>'),
    pcDown: s('<rect x="1" y="1" width="13" height="14" fill="#566078"/><rect x="2" y="6" width="7" height="7" fill="#e6e6e6" stroke="#111"/><path d="M11 3v7M8 9l3 4 3-4" stroke="#fff" stroke-width="2"/>'),
    pcUp: s('<rect x="1" y="1" width="13" height="14" fill="#566078"/><rect x="2" y="6" width="7" height="7" fill="#e6e6e6" stroke="#111"/><path d="M11 13V5M8 6l3-4 3 4" stroke="#fff" stroke-width="2"/>'),
    help: `<svg width="16" height="16" viewBox="0 0 16 16"><path d="M1 1l8 6-3 1 2 5-2 1-2-5-3 3z" fill="#101c52"/><text x="9" y="15" font-size="10" font-weight="bold" fill="#101c52" font-family="Liberation Sans">?</text></svg>`,

    pointer: s('<path d="M2 1v12l3-3 2 5 2-1-2-5h4z" fill="#fff" stroke="#111"/>'),
    wire: s('<path d="M1 4l3-3 3 3M4 1v5h8v7M10 11l2 3 2-3" stroke="#222" stroke-width="1.2"/>'),
    block: s('<rect x="1" y="3" width="14" height="10" fill="#fff" stroke="#1d8a38" stroke-width="1.5"/><path d="M3 3l5 5-5 5zM13 3L8 8l5 5" stroke="#1d8a38" fill="#8fd8a0"/>'),
    serifA: `<svg width="14" height="16" viewBox="0 0 14 16"><text x="1" y="15" font-size="17" fill="#222" font-family="Liberation Serif">A</text></svg>`,
    al1: s('<path d="M2 3h12M4 1v14M10 1v14" stroke="#8c8c8c" stroke-width="2"/>'),
    al2: s('<rect x="2" y="3" width="10" height="4" fill="#9a9a9a"/><rect x="2" y="9" width="10" height="4" fill="#9a9a9a"/><path d="M14 1v14" stroke="#8c8c8c" stroke-width="2"/>'),
    al3: s('<path d="M1 2h14" stroke="#8c8c8c" stroke-width="2"/><rect x="3" y="4" width="4" height="11" fill="#9a9a9a"/><rect x="9" y="4" width="4" height="11" fill="#9a9a9a"/>'),
    al4: s('<path d="M8 1v14" stroke="#8c8c8c" stroke-width="2"/><rect x="2" y="6" width="4" height="4" fill="#9a9a9a"/><rect x="10" y="4" width="5" height="8" fill="#9a9a9a"/>'),
    al5: s('<path d="M1 8h14" stroke="#8c8c8c" stroke-width="2"/><rect x="5" y="2" width="5" height="4" fill="#9a9a9a"/><rect x="3" y="10" width="9" height="4" fill="#9a9a9a"/>'),
    front: s('<path d="M5 1h10v10" stroke="#888"/><path d="M1 15V6" stroke="#888"/><rect x="3" y="3" width="9" height="9" fill="#1d9a3a"/><path d="M1 15h10" stroke="#888" stroke-width="1.5"/>'),
    back: s('<rect x="8" y="1" width="7" height="7" fill="#9a9a9a"/><rect x="1" y="8" width="7" height="7" fill="#9a9a9a"/><rect x="4" y="4" width="8" height="8" fill="#1d9a3a"/>'),
    col1: s('<rect x="1.5" y="1.5" width="12" height="13" fill="#fff" stroke="' + navy + '" stroke-width="1.3"/>'),
    col2: s('<rect x="1.5" y="1.5" width="12" height="13" fill="#fff" stroke="' + navy + '" stroke-width="1.3"/><path d="M7.5 1v14" stroke="' + navy + '" stroke-width="1.3"/>'),
    col3: s('<rect x="1.5" y="1.5" width="12" height="13" fill="#fff" stroke="' + navy + '" stroke-width="1.3"/><path d="M5.5 1v14M9.5 1v14" stroke="' + navy + '" stroke-width="1.3"/>'),
    zoomP: s('<circle cx="6.5" cy="6.5" r="5" fill="#eef3fb" stroke="#18305c" stroke-width="1.4"/><path d="M4 6.5h5M6.5 4v5" stroke="#18305c" stroke-width="1.4"/><path d="M10 10l5 5" stroke="#c9a227" stroke-width="2.4"/><path d="M13 13l2 2" stroke="#2a6fc2" stroke-width="2.4"/>'),
    zoomM: s('<circle cx="6.5" cy="6.5" r="5" fill="#eef3fb" stroke="#18305c" stroke-width="1.4"/><path d="M4 6.5h5" stroke="#18305c" stroke-width="1.4"/><path d="M10 10l5 5" stroke="#c9a227" stroke-width="2.4"/><path d="M13 13l2 2" stroke="#2a6fc2" stroke-width="2.4"/>'),
    eraser: s('<path d="M3 11l8-9 4 3-7 7z" fill="#b9b9b9"/><rect x="1" y="13" width="14" height="3" fill="#9d9d9d"/>'),
    numbers: `<svg width="16" height="16" viewBox="0 0 16 16"><rect x=".5" y=".5" width="15" height="15" fill="#fff" stroke="#8fa5d8" stroke-dasharray="1.5 1"/><text x="8" y="7" font-size="6.5" text-anchor="middle" fill="${navy}" font-family="Liberation Sans">1 : 2</text><text x="8" y="14" font-size="6.5" text-anchor="middle" fill="${navy}" font-family="Liberation Sans">3 : 4</text></svg>`,
    split: s('<path d="M9 0h7v8z" fill="#e8cf90"/><path d="M0 8h8v8H0z" fill="#e8cf90"/><path d="M2 4h3M6 1v6M3 1v6" stroke="#18305c"/><rect x="9" y="9" width="6" height="6" fill="#fff" stroke="#111"/><path d="M1 15l4-4" stroke="#2a6fc2" stroke-width="2"/>'),
    sim: `<svg width="18" height="18" viewBox="0 0 18 18"><rect x="1" y="1" width="4" height="4" fill="none" stroke="#111"/><rect x="11" y="1" width="4" height="4" fill="none" stroke="#f00"/><rect x="1" y="9" width="4" height="4" fill="none" stroke="#111"/><path d="M5 3h6M8 3v6" stroke="#f00"/><text x="6" y="17" font-size="7" fill="#222" font-family="Liberation Sans">SIM</text></svg>`,
    simSm: `<svg width="17" height="17" viewBox="0 0 18 18"><rect x="1" y="1" width="4" height="4" fill="none" stroke="#111"/><rect x="11" y="1" width="4" height="4" fill="none" stroke="#f00"/><rect x="1" y="9" width="4" height="4" fill="none" stroke="#111"/><path d="M5 3h6M8 3v6" stroke="#f00"/><text x="6" y="17" font-size="7" fill="#222" font-family="Liberation Sans">SIM</text></svg>`,
    online: s('<rect x="1" y="1" width="8" height="6" fill="#d0d8ec" stroke="#4b5f8c"/><rect x="5" y="8" width="11" height="8" fill="#6a7488"/><rect x="7" y="10" width="4" height="4" fill="#18d040" stroke="#111"/><path d="M3 7v7h3" stroke="#18a040"/>'),
    route: s('<path d="M1 13h4v-2h3V5h3V3h4" stroke="#1c2750" stroke-width="2" stroke-dasharray="2 1"/>'),
    sink: s('<rect x="1" y="5" width="14" height="3" fill="#9aa6b8"/><rect x="1" y="11" width="14" height="3" fill="#9aa6b8"/><path d="M8 1v8M5 6l3 4 3-4" stroke="#101c52" stroke-width="1.6"/>'),
    rise: s('<rect x="1" y="5" width="14" height="3" fill="#9aa6b8"/><rect x="1" y="11" width="14" height="3" fill="#9aa6b8"/><path d="M8 11V3M5 6l3-4 3 4" stroke="#101c52" stroke-width="1.6"/>'),

    amp: `<svg width="23" height="33" viewBox="0 0 23 33" fill="none"><text x="4" y="15" font-size="12" fill="#111" font-family="Liberation Sans">A</text><path d="M13 10h7M17 7l3 3-3 3M3 22h4M15 22h5M7 17v10l8-5z" stroke="#111"/></svg>`,

    spinArr: s('<path d="M6 2l3 4H3zM6 14l3-4H3z" fill="#666"/>', 12, 16),
    plug: s('<path d="M4 2l10 11" stroke="#444"/><path d="M6 7l4-3 3 4-4 3z" fill="#556"/><circle cx="3" cy="13" r="2.5" fill="#22d020"/>'),
    play: s('<path d="M2 1l12 7-12 7z" fill="#13b850"/>'),
    stopR: s('<rect x="2" y="2" width="12" height="12" fill="#f80040"/>'),
    pause: s('<rect x="3" y="2" width="4" height="13" fill="#ff8000"/><rect x="9" y="2" width="4" height="13" fill="#ff8000"/>'),
    reload: s('<path d="M13 6A6 6 0 1 0 13 11" stroke="#8a8a8a" stroke-width="2.5"/><path d="M9 1l6 0v6z" fill="#8a8a8a"/>'),
    clock: s('<circle cx="8" cy="8" r="6.5" fill="#fff" stroke="#2a4fb0" stroke-width="1.5"/><path d="M8 4v4.5h3" stroke="#2a4fb0" stroke-width="1.3"/>'),
    tree2: s('<rect x="3" y="1" width="5" height="5" fill="#777"/><rect x="1" y="10" width="5" height="5" fill="#777"/><rect x="10" y="10" width="5" height="5" fill="#777"/><path d="M5 6v2h-2v2M5 8h7v2" stroke="#777"/>'),
    tbl: s('<rect x="1.5" y="1.5" width="13" height="13" fill="#fff" stroke="#2a4fb0"/>' + bars([4, 6, 8, 10, 12], 3, 13, '#2a4fb0')),
    grid: s('<rect x="0" y="1" width="16" height="14" fill="#5b9a4e"/><path d="M4 1v14M8 1v14M12 1v14M0 5h16M0 9h16M0 13h16" stroke="#cfe4c8" stroke-width=".7"/>'),
    plc: s('<rect x="2" y="1" width="10" height="14" fill="#2e3a52"/><rect x="4" y="5" width="6" height="5" fill="#ccd" stroke="#111"/>', 13, 16),

    xSave: s('<path d="M1 1h10l3 3v10H1z" stroke="#fff" stroke-width="2"/><rect x="4" y="1" width="6" height="4" fill="#fff"/><rect x="4" y="9" width="7" height="5" fill="#fff"/>'),
    xUndo: s('<path d="M5 2L1 6l4 4" stroke="#fff" stroke-width="2"/><path d="M2 6h7c5 0 5 7 0 7H7" stroke="#fff" stroke-width="2"/>'),
    xRedo: s('<path d="M10 2l4 4-4 4" stroke="#5e9a7c" stroke-width="2"/><path d="M13 6H6c-5 0-5 7 0 7h2" stroke="#5e9a7c" stroke-width="2"/>'),
    xChevW: s('<path d="M1 1l3 3 3-3" stroke="#9cc7b0"/>', 8, 6),
    xChevG: s('<path d="M1 1l3 3 3-3" stroke="#5e9a7c"/>', 8, 6),
    xQat: s('<path d="M1 1h6" stroke="#fff"/><path d="M1 3h6L4 7z" fill="#fff"/>', 8, 8),
    xBox: s('<rect x="1" y="1.5" width="12" height="9" stroke="#cfe3d8"/><path d="M1 3.5h12M7 9V5M5 7l2-2 2 2" stroke="#cfe3d8"/>', 14, 12),
    xMin: s('<path d="M0 .5h10" stroke="#cfe3d8"/>', 10, 1),
    xMax: s('<rect x=".5" y=".5" width="9" height="9" stroke="#cfe3d8"/>', 10, 10),
    xClose: s('<path d="M0 0l10 10M10 0L0 10" stroke="#cfe3d8"/>', 10, 10),
    bulb: s('<path d="M6 .8a5 5 0 0 0-2.5 9.2V12h5v-2A5 5 0 0 0 6 .8zM4 14h4" stroke="#fff"/>', 12, 15),
    person: s('<circle cx="7.5" cy="5" r="4" stroke="#fff"/><path d="M1 15c0-3 2-6 5-6M10 12h5M12.5 9.5v5" stroke="#fff"/>'),
    xPaste: s('<rect x="1" y="4" width="22" height="27" rx="1" fill="#edc07d"/><rect x="7" y="1" width="10" height="6" fill="#666"/><path d="M14 13h9l6 6v13H14z" fill="#fff" stroke="#666"/>', 30, 32),
    xCut: s('<path d="M4 1l7 9M11 1L4 10" stroke="#666"/><circle cx="4" cy="12" r="2.5" stroke="#2e75b6"/><circle cx="11" cy="12" r="2.5" stroke="#2e75b6"/>'),
    xCopy: s('<rect x="1" y="1" width="9" height="11" fill="#fff" stroke="#555"/><rect x="6" y="5" width="9" height="10" fill="#fff" stroke="#555"/>' + bars([8, 10, 12], 8, 13, '#2e75b6')),
    xBrush: s('<path d="M7 7l5-6 3 3-6 5z" fill="#666"/><path d="M1 13l6-6 3 3-4 5z" fill="#f2c37d"/>'),
    xBorder: s('<rect x="1.5" y="1.5" width="12" height="12" stroke="#888" stroke-dasharray="1 1"/><path d="M7.5 1v13M1 7.5h13" stroke="#888" stroke-dasharray="1 1"/>'),
    xFill: s('<path d="M3 7l5-5 5 5-5 5z" fill="#fff" stroke="#555"/><path d="M13 7c2 1 2 3 1 4" stroke="#2e75b6" stroke-width="2"/><rect y="13" width="16" height="4" fill="#ff0"/>', 16, 17),
    vTop: s('<path d="M1 2h14" stroke="#555"/>' + bars([5, 8], 3, 13, '#555')),
    vMid: s(bars([4, 8, 12], 2, 14, '#555')),
    vBot: s(bars([8, 11, 14], 2, 14, '#555')),
    hL: s(bars([3, 11], 1, 15, '#555') + bars([7, 15], 1, 11, '#555')),
    hC: s(bars([3, 11], 1, 15, '#555') + bars([7, 15], 3, 13, '#555')),
    hR: s(bars([3, 11], 1, 15, '#555') + bars([7, 15], 5, 15, '#555')),
    xMerge: s('<rect x="1.5" y="1.5" width="13" height="13" stroke="#555"/><path d="M1 5h14M1 11h14" stroke="#888"/><path d="M3 8h10M5 6L3 8l2 2M11 6l2 2-2 2" stroke="#2e75b6"/>'),
    inL: s(bars([2, 14], 1, 15, '#555') + bars([6, 10], 8, 15, '#555') + '<path d="M7 8H1M4 5L1 8l3 3" stroke="#2e75b6" stroke-width="1.5"/>'),
    inR: s(bars([2, 14], 1, 15, '#555') + bars([6, 10], 8, 15, '#555') + '<path d="M1 8h6M4 5l3 3-3 3" stroke="#2e75b6" stroke-width="1.5"/>'),
    xOrient: s('<path d="M3 12L12 3M6 14L15 5" stroke="#666"/><path d="M1 6l4-4 3 3-4 4z" fill="#888"/>'),
    xCond: s('<rect x=".5" y=".5" width="11" height="11" fill="#fff" stroke="#999"/><rect x="1" y="1" width="5" height="3" fill="#d9534f"/><rect x="1" y="5" width="5" height="2" fill="#e89b3c"/><rect x="1" y="8" width="5" height="2" fill="#2e75b6"/><rect x="7.5" y="8.5" width="8" height="7" fill="#fff" stroke="#555"/><path d="M9 11h5M9 13h5M13 9.5l-3 5" stroke="#333" stroke-width=".8"/>'),
    xTable: s('<rect x=".5" y=".5" width="13" height="11" fill="#d5dfee" stroke="#888"/><path d="M5 0v12M9 0v12M0 4h14M0 8h14" stroke="#888"/><path d="M15 3l-6 8" stroke="#666" stroke-width="2"/><circle cx="7" cy="13" r="2.5" fill="#2e75b6"/>'),
    xStyle: s('<rect x=".5" y=".5" width="13" height="11" fill="#bcd0ea" stroke="#888"/><path d="M15 3l-6 8" stroke="#666" stroke-width="2"/><circle cx="7" cy="13" r="2.5" fill="#2e75b6"/>'),
    xCells: s('<path d="M1 2h14M1 0v4M15 0v4" stroke="#2e75b6"/><rect x="1.5" y="5.5" width="13" height="10" stroke="#666"/><path d="M6 5v11M10 5v11M1 9h14M1 12h14" stroke="#888"/><rect x="6" y="9" width="4" height="3" fill="#2e75b6"/>'),
    xFind: s('<circle cx="10" cy="6" r="4" stroke="#2e75b6" stroke-width="1.5"/><path d="M7 9l-5 5" stroke="#2e75b6" stroke-width="2.5"/>'),
    xCollapse: s('<path d="M1 6l5-5 5 5" stroke="#555"/>', 12, 7),
    fxX: s('<path d="M2 2l8 8M10 2l-8 8" stroke="#aaa" stroke-width="1.5"/>', 12, 12),
    fxOk: s('<path d="M1 6l4 4 6-8" stroke="#aaa" stroke-width="2"/>', 12, 12),
    upTiny: s('<path d="M4 0l4 4H0z" fill="#666"/>', 8, 4),
    dnTiny: s('<path d="M0 0h8L4 4z" fill="#666"/>', 8, 4),
    vwN: s('<rect x="1.5" y="1.5" width="11" height="11" stroke="#666"/><path d="M5 1v12M9 1v12M1 5h12M1 9h12" stroke="#666"/>', 14, 14),
    vwP: s('<rect x="2.5" y=".5" width="9" height="13" stroke="#666"/>' + bars([4, 6, 8, 10], 4, 10, '#666'), 14, 14),
    vwB: s('<rect x="1.5" y=".5" width="11" height="12" stroke="#666"/><path d="M7 1v7M1 8h12" stroke="#666"/>', 14, 14),

    win: s('<path d="M0 2.5l7-1v6H0zM8 1.300L16.500 0v7.500H8zM0 8.500h7v6l-7-1zM8 8.500h8.500V16L8 14.700z" fill="#111"/>', 17, 16),
    lens: s('<circle cx="11" cy="6.500" r="5.500" stroke="#333" stroke-width="1.300"/><path d="M7 11l-6 6" stroke="#333" stroke-width="1.300"/>', 18, 18),
    cortana: s('<circle cx="8" cy="8" r="6.500" stroke="#111" stroke-width="2.400"/>'),
    taskview: s('<path d="M1 0h10M1 16h10" stroke="#111"/><rect x="1.5" y="4.5" width="10" height="7" stroke="#111"/><rect x="14" y="4" width="2" height="3" fill="#111"/><path d="M15 9v7" stroke="#111"/><path d="M14 0h2v2h-2z" fill="#111"/>'),
    folder: s('<path d="M0 1h8l2 3h12v18H0z" fill="#f7d774"/><path d="M0 4h22v5H0z" fill="#e8b93f"/><path d="M6 22v-8h10v8" fill="#2e8fd8"/><rect x="9" y="17" width="4" height="5" fill="#f7d774"/>', 22, 22),
    store: `<svg width="23" height="24" viewBox="0 0 23 24" fill="none"><path d="M7 6V3c0-3 9-3 9 0v3" stroke="#222" stroke-width="2"/><rect y="6" width="23" height="18" rx="1" fill="#222"/><rect x="7" y="10" width="4" height="4" fill="#f25022"/><rect x="12" y="10" width="4" height="4" fill="#7fba00"/><rect x="7" y="15" width="4" height="4" fill="#00a4ef"/><rect x="12" y="15" width="4" height="4" fill="#ffb900"/></svg>`,
    floppy: s('<path d="M0 1h20l4 4v19H0z" fill="#1a4fc0"/><rect x="5" y="0" width="12" height="8" fill="#ddd"/><rect x="12" y="1" width="3" height="6" fill="#1a4fc0"/><rect x="3" y="11" width="18" height="13" fill="#f8d8de"/><path d="M4 14h16M4 17h16M4 20h16" stroke="#e06a80"/>', 24, 24),
    fox: `<svg width="24" height="26" viewBox="0 0 24 26" fill="none"><defs><linearGradient id="fg" x1="0" y1="0" x2="0" y2="1"><stop offset="0" stop-color="#ffbd4f"/><stop offset=".6" stop-color="#ff6a2d"/><stop offset="1" stop-color="#f23e5c"/></linearGradient></defs><path d="M14 0c3 5 9 7 9 15A11.500 11.500 0 0 1 0 15C0 10 2 7 4 5l2 4c2-3 7-4 8-9z" fill="url(#fg)"/><circle cx="12" cy="15" r="6.500" fill="#7a2ccf"/><path d="M7 13c3-3 9-3 11 1-2-1-3 0-5 1 2 2 3 3 1 5-3 1-7-2-7-7z" fill="#ff9a30"/></svg>`,
    xlApp: `<svg width="25" height="24" viewBox="0 0 25 24"><rect x="7" y="0" width="18" height="24" rx="1" fill="#21a366"/><rect x="16" y="0" width="9" height="8" fill="#33c481"/><rect x="7" y="8" width="9" height="8" fill="#107c41"/><rect x="16" y="16" width="9" height="8" fill="#185c37"/><rect x="0" y="5" width="14" height="14" rx="1" fill="#0f6e3a"/><text x="7" y="16.500" font-size="12" font-weight="bold" text-anchor="middle" fill="#fff" font-family="Liberation Sans">X</text></svg>`,
    trayUp: s('<path d="M1 6l5-5 5 5" stroke="#222" stroke-width="1.200"/>', 12, 8),
    wifi: s('<path d="M3 13A9 9 0 0 1 13 3M6 13A6 6 0 0 1 13 6M9 13a3 3 0 0 1 4-4" stroke="#333" stroke-dasharray="2 1"/><path d="M12 12h2v2h-2z" fill="#333"/>'),
    speaker: s('<path d="M1 6h3l4-4v12l-4-4H1z" stroke="#333"/><path d="M10 5c2 2 2 4 0 6M12 3c3 3 3 7 0 10" stroke="#333"/>'),
    notif: s('<path d="M.5 .5h17v13H8l-3 3v-3H.5z" stroke="#222"/>', 18, 18),
  };

  document.querySelectorAll('[data-i]').forEach(el => { el.innerHTML = ICONS[el.dataset.i] || ''; });

  // gap between the two windows: what is left of the page behind them
  const GAP = [[118,'#f3f3f3'],[80,'#d9d9d9'],[181,'#e6e6e6'],[63,'#f0f0f0'],[80,'#e3e3e3'],[20,'#ccc'],[66,'#f7f7f7'],[38,'#fff'],[39,'#e8f0f7'],[288,'#fff'],[35,'#e8f0f7']];
  const gap = document.getElementById('gap');
  GAP.forEach(([h, c]) => {
    const d = document.createElement('div');
    d.style.height = h + 'px';
    d.style.background = c;
    gap.appendChild(d);
  });
  [['ef',129],['Ga',147],['ffs',167],['a',530],['D',705],['a,',788],['re',812],['te',836]].forEach(([t, y]) => {
    const d = document.createElement('span');
    d.className = 'gap-txt';
    d.textContent = t;
    d.style.top = y + 'px';
    gap.appendChild(d);
  });

  // tree of instructions
  const FOLDER = `<svg width="15" height="16" viewBox="0 0 15 16"><defs><linearGradient id="fd" x1="0" y1="0" x2="1" y2="1"><stop offset="0" stop-color="#fff6d8"/><stop offset="1" stop-color="#f6c65c"/></linearGradient></defs><path d="M.5 15.500V1.500h5l1.500 2h7.500v12z" fill="url(#fd)" stroke="#b5851a"/></svg>`;
  const W = {
    on: 'M1 14h4V6h4v8h3', off: 'M1 14h2V4h8v6h1M7 2v3M4 6h7', both: 'M1 14h3V4h5v10h3M4 2h5',
    mem: 'M1 6h5V3M6 2v2M3 13h3V9h6', blink: 'M1 14h3V5h6v8h2', trig: 'M1 14h3V4h5v10h3M2 2h8',
    pulse: 'M1 15h1v-5h2v5h2v-5h2v5h2v-5h2v5', rnd: 'M1 15h3V5h5v10h3', stair: 'M1 14h3V6h4v3h3v5M7 2v3M4 5h7', comf: 'M1 14h2V5h2v9h2V5h2v9h2M3 2h7'
  };
  const TREE = [
    ['f',0,'Istruzioni'],
    ['f',1,'Costanti'],
    ['f',2,'Digitale'],
    ['l',3,'I','Ingresso'],['l',3,'C','Tasto cursore'],['l',3,'F','Tasto funzione LOGO! TD'],['l',3,'S','Bit registro di scorrimento'],
    ['l',3,'lo','Stato 0(low)'],['l',3,'hi','Stato 1(high)'],['l',3,'Q','Uscita'],['l',3,'X','Morsetto aperto'],['l',3,'M','Merker','last'],
    ['f',2,'Analogico'],
    ['l',3,'AI','Ingresso analogico'],['l',3,'AQ','Uscita analogica'],['l',3,'AM','Merker analogico','last'],
    ['f',2,'Rete'],
    ['n',3,'I','Ingresso di rete'],['n',3,'AI','Ingresso analogico di rete'],['n',3,'Q','Uscita di rete'],['n',3,'AQ','Uscita analogica di rete','last'],
    ['f',1,'Funzioni di base'],
    ['l',2,'&','AND'],['l',2,'&↑','AND (fronte)'],['l',2,'&.','NAND'],['l',2,'&↓','NAND (fronte)'],['l',2,'≥1','OR'],['l',2,'≥1.','NOR'],['l',2,'=1','XOR'],['l',2,'1.','NOT'],
    ['f',1,'Funzioni speciali'],
    ['f',2,'Temporizzatore'],
    ['w',3,'on','Accensione ritardata'],['w',3,'off','Spegnimento ritardato'],['w',3,'both','Accensione/spegnimento ritardato'],['w',3,'mem',"Ritardo all'attivazione con memoria"],
    ['w',3,'blink','Relè ad intermittenza/emissione'],['w',3,'trig','Relè ad intermittenza trigger'],['w',3,'pulse','Generatore di impulsi asincrono'],['w',3,'rnd','Generatore casuale'],
    ['w',3,'stair','Interruttore di luci scala'],['w',3,'comf','Interruttore comodo'],['w',3,'on','']
  ];
  let section = 0;
  const tree = document.getElementById('tree');
  TREE.forEach(r => {
    const [kind, depth, a, b, last] = r;
    const row = document.createElement('div');
    row.className = 'tr d-flex align-items-center' + (depth === 0 ? ' d0' : '');
    if (a === 'Rete') section = 1;
    if (a === 'Funzioni di base') section = 0;
    let html = '';
    if (kind === 'f') {
      if (depth === 2) html += '<i class="ind"></i>';
      if (depth > 0) html += '<i class="tri"></i><i class="tconn"></i>';
      html += `<span class="fold">${FOLDER}</span><b>${a}</b>`;
    } else {
      for (let i = 0; i < depth - 1; i++) html += `<i class="ind ${i === 1 && section ? 'none' : ''}"></i>`;
      html += `<i class="conn ${last ? 'last' : ''}"></i>`;
      if (kind === 'w') html += `<span class="lf">${wave(W[a])}</span>`;
      else if (kind === 'n') html += `<span class="lf lf-net">${a}</span>`;
      else html += `<span class="lf">${a}</span>`;
      html += `<span>${b}</span>`;
    }
    row.innerHTML = html;
    tree.appendChild(row);
  });

  // spreadsheet
  const COLS = 'ABCDEFGHIJKL'.split('');
  const K = [200,209,218,227,236,244,253,262,271,280,289,298,307,316,324,333,342,351,360,369,378,387,396,404,413,422,431,440,449,458,467,476,484,493,502,511];
  let t = '<colgroup><col style="width:25px">' + COLS.map((c, i) => `<col style="width:${i === 11 ? 50 : 64}px">`).join('') + '</colgroup>';
  t += '<thead><tr><th><div class="xl-corner"></div></th>' + COLS.map(c => `<th>${c}</th>`).join('') + '</tr></thead><tbody>';
  t += '<tr><th>7</th>' + COLS.map(c => `<td class="hd-b">${{E:'UR',G:'V',I:'T',K:'V'}[c] || ''}</td>`).join('') + '</tr>';
  for (let i = 0; i <= 36; i++) {
    const vals = i < 36 ? {E: i, G: 200 + 8 * i, I: i - 30, K: K[i]} : {};
    t += `<tr><th>${8 + i}</th>` + COLS.map(c => `<td>${vals[c] ?? ''}</td>`).join('') + '</tr>';
  }
  document.getElementById('sheet').innerHTML = t + '</tbody>';
</script>
</body>
</html>
